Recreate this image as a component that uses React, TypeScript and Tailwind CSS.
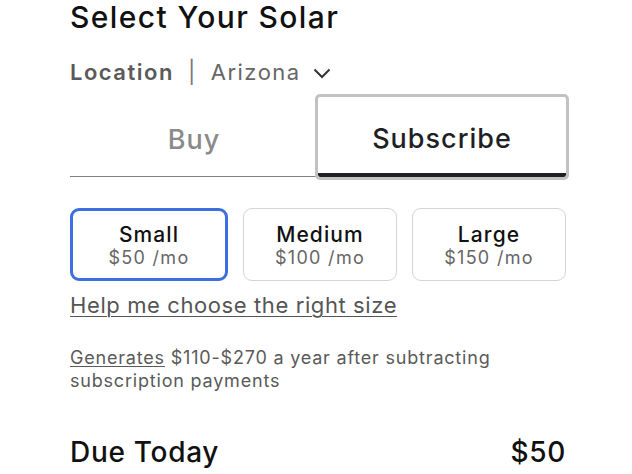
import React from "react";

const font = { fontFamily: "Inter, 'Open Sans', sans-serif" };

function Card({ title, price, selected }: { title: string; price: string; selected?: boolean }) {
  return (
    <div
      className={
        "flex-1 h-[73px] rounded-[9px] flex flex-col items-center justify-center pt-[3px] " +
        (selected ? "border-[3px] border-[#3d6fe0]" : "border border-[#d4d4d4]")
      }
    >
      <div className="text-[21px] leading-[24px] font-medium text-[#111] tracking-[1.1px]">{title}</div>
      <div className="text-[18px] leading-[22px] text-[#666] tracking-[1.3px]">{price}</div>
    </div>
  );
}

export default function App() {
  return (
    <div className="w-[632px] h-[474px] bg-white overflow-hidden" style={font}>
      <div className="ml-[70px] w-[496px] flex flex-col">
        <h1 className="text-[30px] leading-[32px] font-medium text-[#111] tracking-[1.4px] pt-[1px]">Select Your Solar</h1>
        <div className="flex items-center mt-[23px] h-[32px] text-[22px] tracking-[1.5px]">
          <span className="font-semibold text-[#5a5a5a]">Location</span>
          <span className="text-[#777] mx-[14px]">|</span>
          <span className="text-[#666]">Arizona</span>
          <svg className="ml-[12px] mt-[2px]" width="18" height="12" viewBox="0 0 18 12" fill="none">
            <path d="M1.5 2.5 L9 10 L16.5 2.5" stroke="#333" strokeWidth="2" />
          </svg>
        </div>
        <div className="flex mt-[9px] h-[80px] relative">
          <div className="flex-1 flex items-center justify-center border-b border-[#808080] text-[27px] font-medium text-[#8a8a8a] tracking-[1px] pt-[8px]">
            Buy
          </div>
          <div className="flex-1 flex items-center justify-center border-b-4 border-[#1f1f26] text-[27px] font-medium text-[#1f1f26] tracking-[1px] outline outline-[3px] outline-[#c2c2c2] rounded-[2px] pt-[8px]">
            Subscribe
          </div>
        </div>
        <div className="flex gap-[15px] mt-[31px]">
          <Card title="Small" price="$50 /mo" selected />
          <Card title="Medium" price="$100 /mo" />
          <Card title="Large" price="$150 /mo" />
        </div>
        <div className="mt-[11px] text-[22px] leading-[26px] text-[#555] underline underline-offset-[3px] decoration-[1px] tracking-[0.6px]">
          Help me choose the right size
        </div>
        <div className="mt-[28px] text-[18px] leading-[23px] text-[#5a5a5a] tracking-[0.8px]">
          <span className="underline underline-offset-[2px] decoration-[1px]">Generates</span> $110-$270 a year after subtracting subscription payments
        </div>
        <div className="mt-[45px] flex justify-between text-[28px] leading-[30px] font-medium text-[#111] tracking-[0.7px]">
          <span>Due Today</span>
          <span>$50</span>
        </div>
      </div>
    </div>
  );
}
